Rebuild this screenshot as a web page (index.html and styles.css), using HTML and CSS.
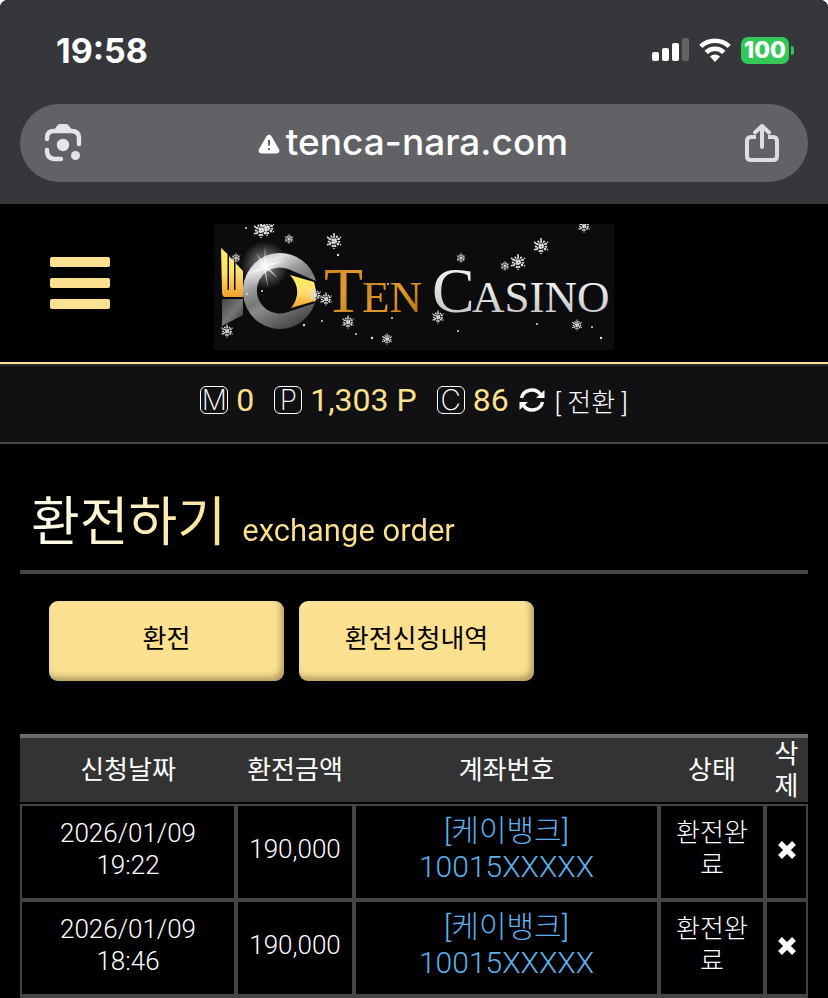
FILE: index.html
```
<!DOCTYPE html>
<html lang="ko">
<head>
    <meta charset="UTF-8">
    <meta name="viewport" content="width=device-width, initial-scale=1.0">
    <title>Ten Casino</title>
    <link rel="stylesheet" href="styles.css">
</head>
<body>

    <div class="browser">
        <div class="status">
            <span class="clock">19:58</span>
            <div class="status-icons">
                <svg width="37" height="24" viewBox="0 0 37 24" fill="#fff">
                    <rect x="0" y="14" width="7" height="9" rx="2"/>
                    <rect x="10" y="10" width="7" height="13" rx="2"/>
                    <rect x="20" y="5" width="7" height="18" rx="2"/>
                    <rect x="30" y="0" width="7" height="23" rx="2" fill="#616266"/>
                </svg>
                <svg width="32" height="24" viewBox="0 0 32 24" fill="none" stroke="#fff" stroke-width="4.6">
                    <path d="M1.8 8.4 A20.5 20.5 0 0 1 30.2 8.4"/>
                    <path d="M7.2 14.4 A12.5 12.5 0 0 1 24.8 14.4"/>
                    <path d="M16 24 L11 18.6 A7.2 7.2 0 0 1 21 18.6 Z" fill="#fff" stroke="none"/>
                </svg>
                <div class="battery"><span class="battery-level">100</span></div>
            </div>
        </div>
        <div class="urlbar">
            <button class="icon-btn" type="button" aria-label="Lens">
                <svg width="38" height="38" viewBox="0 0 38 38" fill="none" stroke="#e4e5ea" stroke-width="4.4" stroke-linecap="round">
                    <path d="M3 15 V14 Q3 7 10 7 H27 Q35 7 35 14 V20"/>
                    <path d="M3 26 Q3 35 11 35 H17"/>
                    <path d="M10 6 L13 2 Q14 0 16 0 H22 Q24 0 25 2 L28 6 Z" fill="#e4e5ea" stroke="none"/>
                    <circle cx="19" cy="21" r="6.2" fill="#e4e5ea" stroke="none"/>
                    <circle cx="31.5" cy="31.5" r="4.5" fill="#e4e5ea" stroke="none"/>
                </svg>
            </button>
            <div class="address">
                <svg width="22" height="20" viewBox="0 0 22 20">
                    <path d="M8.6 2 Q11 -1.2 13.4 2 L21 15.2 Q22.4 19.5 18 19.5 H4 Q-.4 19.5 1 15.2 Z" fill="#fff"/>
                    <path d="M11 6 V11.5 M11 14 V16" stroke="#616266" stroke-width="2"/>
                </svg>
                <span>tenca-nara.com</span>
            </div>
            <button class="icon-btn" type="button" aria-label="Share">
                <svg width="36" height="38" viewBox="0 0 36 38" fill="none" stroke="#dcdde1" stroke-width="4" stroke-linecap="round" stroke-linejoin="round">
                    <path d="M12 13 H7 Q3 13 3 17 V32 Q3 36 7 36 H29 Q33 36 33 32 V17 Q33 13 29 13 H24" stroke-linecap="butt"/>
                    <path d="M18 23 V3 M11 8.5 L18 2 L25 8.5"/>
                </svg>
            </button>
        </div>
    </div>

    <header class="header">
        <button class="menu" type="button" aria-label="메뉴">
            <span class="menu-bar"></span>
            <span class="menu-bar"></span>
            <span class="menu-bar"></span>
        </button>
        <a class="logo" href="#" aria-label="Ten Casino">
            <svg width="400" height="126" viewBox="0 0 400 126">
                <defs>
                    <linearGradient id="steel" x1="0.1" y1="0" x2="0.6" y2="1">
                        <stop offset="0" stop-color="#888"/>
                        <stop offset="0.2" stop-color="#ddd"/>
                        <stop offset="0.4" stop-color="#999"/>
                        <stop offset="0.55" stop-color="#777"/>
                        <stop offset="0.65" stop-color="#8a8a8a"/>
                        <stop offset="1" stop-color="#48484a"/>
                    </linearGradient>
                    <linearGradient id="handle" x1="0" y1="0" x2="1" y2="1">
                        <stop offset="0" stop-color="#444"/>
                        <stop offset="0.5" stop-color="#777"/>
                        <stop offset="1" stop-color="#333"/>
                    </linearGradient>
                    <linearGradient id="gold" x1="0" y1="0" x2="0" y2="1">
                        <stop offset="0" stop-color="#fdf05a"/>
                        <stop offset="0.5" stop-color="#ffdf72"/>
                        <stop offset="1" stop-color="#f2a02c"/>
                    </linearGradient>
                    <linearGradient id="amber" x1="0" y1="0" x2="1" y2="1">
                        <stop offset="0" stop-color="#c47d1c"/>
                        <stop offset="0.5" stop-color="#e09a30"/>
                        <stop offset="1" stop-color="#a8660c"/>
                    </linearGradient>
                    <linearGradient id="silver" x1="0" y1="0" x2="0" y2="1">
                        <stop offset="0" stop-color="#fff"/>
                        <stop offset="1" stop-color="#bbb"/>
                    </linearGradient>
                    <radialGradient id="shine">
                        <stop offset="0" stop-color="#fff"/>
                        <stop offset="0.3" stop-color="#fff" stop-opacity="0.5"/>
                        <stop offset="1" stop-color="#fff" stop-opacity="0"/>
                    </radialGradient>
                    <g id="flake" fill="none" stroke="#ddd">
                        <path d="M0 -8 V8 M-7 -4 L7 4 M-7 4 L7 -4" stroke-width="1.5" stroke-dasharray="2 1"/>
                        <circle r="5" stroke-width="2.5" stroke-dasharray="1.5 1.3"/>
                        <circle r="2" stroke-width="2" stroke-dasharray="2 1"/>
                    </g>
                </defs>
                <rect width="400" height="126" fill="#0c0c0e"/>
                <path d="M8 75 H29 V91 L8 102 Z" fill="url(#handle)"/>
                <path d="M7 24 L13.5 30 V66 H15 V32 L20 37 V66 H21.5 V39 L29 47 V73 H11 Q8 73 8 67 Z" fill="url(#gold)"/>
                <path d="M65 29 A37 38 0 0 1 102 57 L74 45 A23 23 0 1 0 74 88 L101 79 A37 38 0 1 1 65 29 Z" fill="url(#steel)"/>
                <path d="M76 51 L100 58 Q103 68 101 77 L77 84 Q90 67 76 51 Z" fill="url(#gold)"/>
                <circle cx="51" cy="41" r="24" fill="url(#shine)" opacity="0.8"/>
                <path d="M51 22 L52 40 L70 37 L54 43 L64 54 L52 45 L54 64 L50 46 L34 50 L49 43 L42 28 L50 40 Z" fill="#fff" opacity="0.6"/>
                <g class="logo-text">
                    <text class="logo-cap" x="110" y="88" fill="url(#amber)">T</text>
                    <text class="logo-small" x="148" y="88" fill="url(#amber)">EN</text>
                    <text class="logo-cap" x="218" y="88" fill="url(#silver)">C</text>
                    <text class="logo-small" x="258" y="88" fill="url(#silver)">ASINO</text>
                </g>
                <use href="#flake" x="47" y="6"/>
                <use href="#flake" x="53" y="4"/>
                <use href="#flake" x="120" y="17"/>
                <use href="#flake" x="327" y="22"/>
                <use href="#flake" x="304" y="38"/>
                <use href="#flake" transform="translate(112 75) scale(.8)"/>
                <use href="#flake" transform="translate(134 98) scale(.8)"/>
                <use href="#flake" transform="translate(13 107) scale(.8)"/>
                <use href="#flake" transform="translate(370 2) scale(.8)"/>
                <use href="#flake" transform="translate(75 15) scale(.6)"/>
                <use href="#flake" transform="translate(22 34) scale(.6)"/>
                <use href="#flake" transform="translate(101 71) scale(.8)"/>
                <use href="#flake" transform="translate(173 115) scale(.7)"/>
                <use href="#flake" transform="translate(224 93) scale(.8)"/>
                <use href="#flake" transform="translate(247 34) scale(.6)"/>
                <use href="#flake" transform="translate(291 42) scale(.6)"/>
                <use href="#flake" transform="translate(363 101) scale(.7)"/>
                <g fill="#ddd">
                    <circle cx="32" cy="4" r="1"/><circle cx="124" cy="31" r="1.2"/><circle cx="33" cy="70" r="1"/>
                    <circle cx="48" cy="67" r="1"/><circle cx="90" cy="101" r="1.2"/><circle cx="108" cy="97" r="1"/>
                    <circle cx="158" cy="114" r="1.2"/><circle cx="178" cy="94" r="1"/><circle cx="174" cy="60" r="1"/>
                    <circle cx="244" cy="107" r="1"/><circle cx="323" cy="100" r="1"/><circle cx="378" cy="103" r="1"/>
                    <circle cx="387" cy="114" r="1.2"/><circle cx="142" cy="110" r="1"/>
                </g>
            </svg>
        </a>
    </header>

    <div class="wallet">
        <span class="coin">M</span><span class="amount">0</span>
        <span class="coin">P</span><span class="amount">1,303 P</span>
        <span class="coin">C</span><span class="amount">86</span>
        <button class="convert" type="button">
            <svg width="26" height="26" viewBox="0 0 26 26" fill="none" stroke="#fff" stroke-width="3.4">
                <path d="M2.5 11 A10.5 10 0 0 1 21.5 7.5"/>
                <path d="M23.5 15 A10.5 10 0 0 1 4.5 18.5"/>
                <path d="M25.5 3 V11 H17 Z M.5 23 V15 H9 Z" fill="#fff" stroke="none"/>
            </svg>
            <span>[ 전환 ]</span>
        </button>
    </div>

    <main class="content">
        <h1 class="title"><span class="title-text">환전하기 <small>exchange order</small></span></h1>

        <nav class="tabs">
            <button class="tab" type="button">환전</button>
            <button class="tab" type="button">환전신청내역</button>
        </nav>

        <table class="orders">
            <colgroup>
                <col class="col-date">
                <col class="col-amount">
                <col>
                <col class="col-state">
                <col class="col-delete">
            </colgroup>
            <thead>
                <tr>
                    <th>신청날짜</th>
                    <th>환전금액</th>
                    <th>계좌번호</th>
                    <th>상태</th>
                    <th>삭제</th>
                </tr>
            </thead>
            <tbody>
                <tr>
                    <td>2026/01/09 19:22</td>
                    <td>190,000</td>
                    <td class="account">[케이뱅크]<br>10015XXXXX</td>
                    <td>환전완료</td>
                    <td>
                        <button class="delete" type="button" aria-label="삭제">
                            <svg width="18" height="18" viewBox="0 0 18 18" stroke="#fff" stroke-width="5.5">
                                <path d="M2 2 L16 16 M16 2 L2 16"/>
                            </svg>
                        </button>
                    </td>
                </tr>
                <tr>
                    <td>2026/01/09 18:46</td>
                    <td>190,000</td>
                    <td class="account">[케이뱅크]<br>10015XXXXX</td>
                    <td>환전완료</td>
                    <td>
                        <button class="delete" type="button" aria-label="삭제">
                            <svg width="18" height="18" viewBox="0 0 18 18" stroke="#fff" stroke-width="5.5">
                                <path d="M2 2 L16 16 M16 2 L2 16"/>
                            </svg>
                        </button>
                    </td>
                </tr>
            </tbody>
        </table>
    </main>

</body>
</html>
```
FILE: styles.css
```
* {
    box-sizing: border-box;
}
html {
    background-color: #fff;
}
body {
    margin: 0;
    background-color: #000;
    border-radius: 8px 8px 0 0;
    overflow: hidden;
    color: #fff;
    font-family: Roboto, "Noto Sans CJK KR", sans-serif;
    font-weight: 300;
}
button {
    padding: 0;
    border: none;
    background: none;
    color: inherit;
    font: inherit;
    cursor: pointer;
}
svg {
    display: block;
}

/* phone browser */
.browser {
    padding: 0 20px 22px;
    background-color: #36373b;
    font-family: Inter, sans-serif;
}
.status {
    display: flex;
    justify-content: space-between;
    align-items: center;
    height: 104px;
    padding: 0 14px 4px 36px;
}
.clock {
    font-size: 34px;
    font-weight: 700;
}
.status-icons {
    display: flex;
    align-items: center;
    gap: 10px;
}
.battery {
    display: flex;
    align-items: center;
    gap: 2px;
}
.battery::after {
    content: "";
    width: 3px;
    height: 9px;
    border-radius: 0 4px 4px 0;
    background-color: #34c759;
}
.battery-level {
    width: 48px;
    border-radius: 7px;
    background-color: #34c759;
    font-size: 23px;
    font-weight: 800;
    line-height: 27px;
    text-align: center;
}
.urlbar {
    display: flex;
    justify-content: space-between;
    align-items: center;
    height: 78px;
    padding: 0 28px 0 24px;
    border-radius: 39px;
    background-color: #616266;
}
.address {
    display: flex;
    align-items: center;
    gap: 6px;
    padding-bottom: 4px;
    font-size: 37px;
    font-weight: 500;
}
.address svg {
    margin-top: 6px;
}

/* site header */
.header {
    display: grid;
    grid-template-columns: 1fr auto 1fr;
    align-items: center;
    padding: 20px 50px 12px;
    border-bottom: 2px solid #fbe08f;
}
.menu {
    display: flex;
    flex-direction: column;
    gap: 11px;
    width: 60px;
    padding-bottom: 8px;
}
.menu-bar {
    width: 100%;
    height: 10px;
    border-radius: 2px;
    background-color: #fbe08f;
}
.logo-text {
    font-family: "Liberation Serif", serif;
}
.logo-cap {
    font-size: 64px;
}
.logo-small {
    font-size: 45px;
}
.wallet {
    display: flex;
    justify-content: center;
    align-items: center;
    height: 80px;
    padding-bottom: 8px;
    border-top: 2px solid #2b2b2d;
    border-bottom: 2px solid #444;
    background-color: #111113;
}
.coin {
    width: 28px;
    height: 28px;
    margin-right: 8px;
    border: 1px solid #fff;
    border-radius: 6px;
    font-family: Inter, sans-serif;
    font-size: 28px;
    font-weight: 200;
    line-height: 26px;
    text-align: center;
}
.amount {
    margin-right: 20px;
    color: #fbe08f;
    font-size: 32px;
    font-weight: 400;
}
.amount:nth-last-child(2) {
    margin-right: 10px;
}
.convert {
    display: flex;
    align-items: center;
    gap: 10px;
    font-size: 26px;
}

/* page */
.content {
    padding: 42px 20px 0;
}
.title {
    margin: 0;
    padding: 0 11px 10px;
    border-bottom: 4px solid #444;
    font-size: 53px;
    font-weight: 400;
    line-height: 74px;
}
.title-text {
    background-image: linear-gradient(90deg, #fffef0, #fbe08f 50%);
    background-clip: text;
    -webkit-background-clip: text;
    color: transparent;
}
.title small {
    margin-left: 3px;
    font-size: 31px;
    line-height: 1;
}
.tabs {
    display: flex;
    gap: 15px;
    padding: 27px 29px 53px;
}
.tab {
    width: 235px;
    height: 80px;
    padding-bottom: 10px;
    border-radius: 9px;
    background-color: #fbe08f;
    box-shadow: inset -3px -4px 6px rgba(0, 0, 0, 0.3), inset 2px 2px 4px rgba(255, 255, 255, 0.2);
    color: #000;
    font-size: 26px;
    font-weight: 400;
}
.orders {
    width: 100%;
    border-collapse: separate;
    border-spacing: 0;
    border-bottom: 2px solid #444;
    table-layout: fixed;
    font-size: 26px;
    line-height: 32px;
    text-align: center;
    word-break: break-all;
}
.col-date {
    width: 216px;
}
.col-amount {
    width: 118px;
}
.col-state {
    width: 106px;
}
.col-delete {
    width: 43px;
}
th {
    padding: 0;
    border-top: 4px solid #6a6a6a;
    border-bottom: 2px solid #000;
    background-color: #333;
    font-weight: 400;
}
td {
    height: 96px;
    padding: 0 8px 6px;
    border: 2px solid #444;
}
td:first-child {
    padding: 0 30px 6px;
}
td:last-child {
    padding: 0 0 4px;
}
.account {
    color: #5fb0ea;
    font-size: 30px;
    line-height: 36px;
}
.delete {
    display: block;
    margin: 0 auto;
}
```
